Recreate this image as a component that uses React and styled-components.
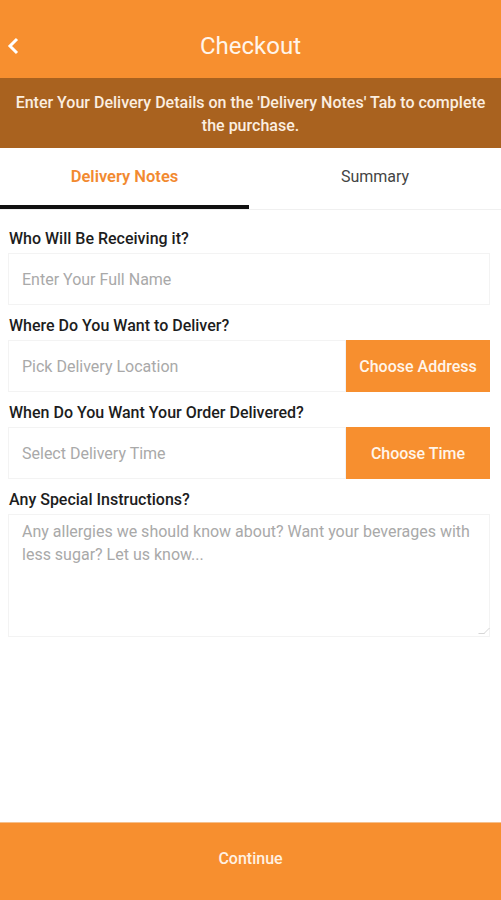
import React from "react";
import styled, { createGlobalStyle } from "styled-components";

const GlobalStyle = createGlobalStyle`
  html, body {
    margin: 0;
    padding: 0;
    background: #ffffff;
    font-family: Roboto, "Liberation Sans", sans-serif;
  }
  * { box-sizing: border-box; }
`;

const Page = styled.div`
  width: 501px;
  height: 900px;
  display: flex;
  flex-direction: column;
  background: #fff;
`;

const Header = styled.header`
  height: 78px;
  background: #f78f2f;
  display: grid;
  grid-template-columns: 40px 1fr 40px;
  align-items: center;
  padding-top: 14px;
`;

const BackButton = styled.button`
  border: none;
  background: none;
  padding: 0 0 0 6px;
  display: flex;
  align-items: center;
  color: #fff;
`;

const Title = styled.h1`
  margin: 0;
  text-align: center;
  color: #fff5ea;
  font-size: 24px;
  font-weight: 400;
`;

const Banner = styled.div`
  height: 70px;
  background: #a9621f;
  color: #fbeee0;
  font-size: 16px;
  font-weight: 500;
  line-height: 23px;
  text-align: center;
  display: flex;
  align-items: center;
  justify-content: center;
  padding: 2px 12px 0;
`;

const Tabs = styled.div`
  height: 62px;
  display: grid;
  grid-template-columns: 249px 1fr;
  border-bottom: 1px solid #f0f0f0;
`;

const Tab = styled.div`
  display: flex;
  align-items: center;
  justify-content: center;
  padding-bottom: 0;
  font-size: ${(p) => (p.active ? "16.5px" : "16px")};
  font-weight: ${(p) => (p.active ? 600 : 400)};
  color: ${(p) => (p.active ? "#f28a30" : "#444")};
  border-bottom: 4px solid ${(p) => (p.active ? "#111" : "transparent")};
`;

const Form = styled.div`
  flex: 1;
  padding: 20px 11px 0 8px;
  display: flex;
  flex-direction: column;
`;

const Label = styled.label`
  font-size: 16px;
  font-weight: 500;
  color: #1d1d1d;
  padding-left: 1px;
  line-height: 18px;
  margin-bottom: 5px;
`;

const Row = styled.div`
  display: flex;
  height: 52px;
  margin-bottom: 12px;
`;

const Input = styled.div`
  flex: 1;
  border: 1px solid #f3f3f3;
  display: flex;
  align-items: center;
  padding-left: 13px;
  font-size: 16px;
  color: #a9a9a9;
`;

const ActionButton = styled.div`
  width: 144px;
  background: #f78f2f;
  color: #fff5ea;
  font-size: 16px;
  font-weight: 500;
  display: flex;
  align-items: center;
  justify-content: center;
`;

const TextArea = styled.div`
  height: 123px;
  border: 1px solid #f3f3f3;
  padding: 5px 8px 0 13px;
  font-size: 16px;
  line-height: 23px;
  color: #a9a9a9;
  position: relative;
`;

const Grip = styled.span`
  position: absolute;
  right: 2px;
  bottom: 2px;
  width: 6px;
  height: 6px;
  border-right: 1px solid #bbb;
  border-bottom: 1px solid #bbb;
  transform: skew(-45deg);
  opacity: 0.6;
`;

const Footer = styled.button`
  height: 78px;
  border: none;
  border-top: 1px solid #f6c08c;
  background: #f78f2f;
  color: #fff1e2;
  font-family: inherit;
  font-size: 16px;
  font-weight: 500;
  padding-bottom: 8px;
`;

export default function App() {
  return (
    <Page>
      <GlobalStyle />
      <Header>
        <BackButton>
          <svg width="14" height="20" viewBox="0 0 14 20">
            <path d="M11 3 L4 10 L11 17" fill="none" stroke="#fff" strokeWidth="3" />
          </svg>
        </BackButton>
        <Title>Checkout</Title>
        <span />
      </Header>
      <Banner>
        Enter Your Delivery Details on the 'Delivery Notes' Tab to complete the purchase.
      </Banner>
      <Tabs>
        <Tab active>Delivery Notes</Tab>
        <Tab>Summary</Tab>
      </Tabs>
      <Form>
        <Label>Who Will Be Receiving it?</Label>
        <Row>
          <Input>Enter Your Full Name</Input>
        </Row>
        <Label>Where Do You Want to Deliver?</Label>
        <Row>
          <Input>Pick Delivery Location</Input>
          <ActionButton>Choose Address</ActionButton>
        </Row>
        <Label>When Do You Want Your Order Delivered?</Label>
        <Row>
          <Input>Select Delivery Time</Input>
          <ActionButton>Choose Time</ActionButton>
        </Row>
        <Label>Any Special Instructions?</Label>
        <TextArea>
          Any allergies we should know about? Want your beverages with less sugar? Let us know...
          <Grip />
        </TextArea>
      </Form>
      <Footer>Continue</Footer>
    </Page>
  );
}
